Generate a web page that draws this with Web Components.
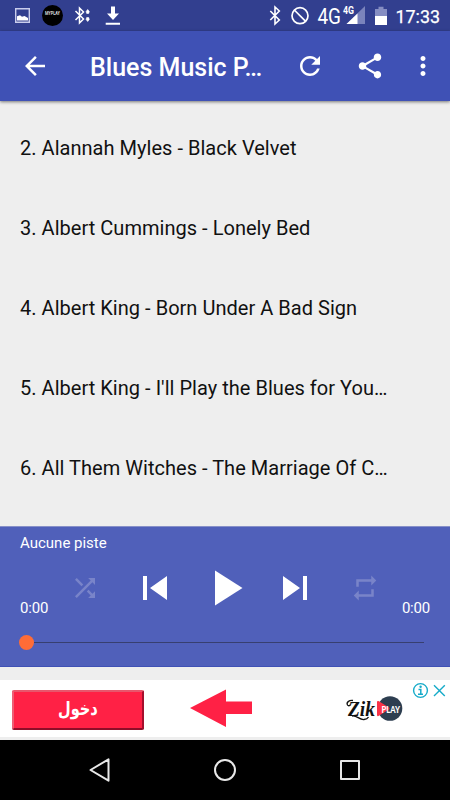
<!DOCTYPE html>
<html lang="fr">
<head>
<meta charset="utf-8">
<title>Blues Music</title>
<style>
  body {
    margin: 0;
    background: #eee;
    font-family: Roboto, sans-serif;
  }
</style>
</head>
<body>
<music-app></music-app>

<script>
class StatusBar extends HTMLElement {
  constructor() {
    super();
    this.attachShadow({ mode: "open" });
    this.shadowRoot.innerHTML = `
      <style>
        :host {
          display: flex;
          justify-content: space-between;
          height: 31px;
          background: #323f8f;
          color: #fff;
        }
        .side { display: flex; }
        svg { display: block; }
        text { font-family: Roboto, sans-serif; fill: #fff; }
      </style>
      <div class="side">
        <svg width="130" height="31" viewBox="0 0 130 31">
          <path d="M15.7 8.7h13.6v13.6H15.7z" fill="none" stroke="#c9cdec" stroke-width="1.4"/>
          <path d="M17 20.5v-4.300l3-1 2 1.500 2.500-.7 3.500 2v2.500z" fill="#fff"/>
          <circle cx="52.500" cy="15.500" r="10.500" fill="#000"/>
          <text x="52.500" y="15" font-size="4.500" font-weight="700" textLength="15" lengthAdjust="spacingAndGlyphs" text-anchor="middle" style="fill: #ddd">MYPLAY</text>
          <path d="M75.500 11l8 8-4 4V8l4 4-8 8" fill="none" stroke="#fff" stroke-width="1.500"/>
          <path d="M87.700 9.500l1.600 2-.6 2h-2l-.6-2zM87.700 21.500l1.600-2-.6-2h-2l-.6 2z" fill="#fff" stroke="#fff" stroke-width=".6"/>
          <path d="M111 6.500h4v7h4l-6 6.500-6-6.500h4zM105.700 22.800h14.300v2h-14.300z" fill="#fff"/>
        </svg>
      </div>
      <div class="side">
        <svg width="185" height="31" viewBox="265 0 185 31">
          <path d="M270.300 11l9 9-4.300 4V7l4.300 4-9 9" fill="none" stroke="#fff" stroke-width="1.600"/>
          <circle cx="300" cy="15.700" r="8" fill="none" stroke="#fff" stroke-width="1.700"/>
          <path d="M294.300 10l11.400 11.400" stroke="#fff" stroke-width="1.700"/>
          <text x="317.500" y="24" font-size="22" textLength="23.500" lengthAdjust="spacingAndGlyphs">4G</text>
          <path d="M365 6v18h-18.500z" fill="#7a83bc"/>
          <path d="M357.500 13.500V24h-11z" fill="#fff"/>
          <text x="343" y="14" font-size="10" font-weight="700" textLength="11" lengthAdjust="spacingAndGlyphs">4G</text>
          <path d="M375 9h3.500V6.800h5V9h3.500v7h-12z" fill="#858dc2"/>
          <path d="M375 16h12v9h-12z" fill="#fff"/>
          <text x="395.500" y="22.500" font-size="17.500" textLength="44.500" lengthAdjust="spacingAndGlyphs" stroke="#fff" stroke-width=".25">17:33</text>
        </svg>
      </div>
    `;
  }
}
customElements.define("status-bar", StatusBar);

class AppToolbar extends HTMLElement {
  constructor() {
    super();
    this.attachShadow({ mode: "open" });
    this.shadowRoot.innerHTML = `
      <style>
        :host {
          display: flex;
          align-items: center;
          box-sizing: border-box;
          height: 70px;
          padding: 0 12.5px 0 20px;
          background: #3f51b5;
          color: #fff;
          box-shadow: 0 1px 3px rgba(0, 0, 0, .5);
          position: relative;
        }
        svg { width: 30px; height: 30px; fill: #fff; flex: none; }
        .title {
          width: 175px;
          margin: 4px 30px 0 40px;
          font-size: 25px;
          line-height: 30px;
          font-weight: 500;
          white-space: nowrap;
        }
        .share { margin: 0 22.5px 0 30px; }
      </style>
      <svg viewBox="0 0 24 24"><path d="M20 11H7.830l5.590-5.590L12 4l-8 8 8 8 1.410-1.410L7.830 13H20v-2z"/></svg>
      <div class="title"><slot></slot></div>
      <svg viewBox="0 0 24 24"><path d="M17.650 6.350C16.200 4.900 14.210 4 12 4c-4.420 0-7.990 3.580-7.990 8s3.570 8 7.990 8c3.730 0 6.840-2.550 7.730-6h-2.080c-.82 2.330-3.040 4-5.650 4-3.310 0-6-2.690-6-6s2.690-6 6-6c1.660 0 3.140.69 4.220 1.780L13 11h7V4l-2.350 2.350z"/></svg>
      <svg class="share" viewBox="0 0 24 24"><path d="M18 16.080c-.76 0-1.440.3-1.960.77L8.910 12.700c.05-.23.09-.46.09-.7s-.04-.47-.09-.7l7.050-4.110c.54.5 1.250.81 2.040.81 1.660 0 3-1.340 3-3s-1.340-3-3-3-3 1.340-3 3c0 .24.04.47.09.7L8.040 9.810C7.500 9.310 6.790 9 6 9c-1.660 0-3 1.340-3 3s1.340 3 3 3c.79 0 1.500-.31 2.040-.81l7.120 4.160c-.05.21-.08.43-.08.65 0 1.610 1.310 2.920 2.920 2.920s2.920-1.310 2.920-2.920-1.310-2.920-2.920-2.920z"/></svg>
      <svg viewBox="0 0 24 24"><path d="M12 8c1.100 0 2-.9 2-2s-.9-2-2-2-2 .9-2 2 .9 2 2 2zm0 2c-1.100 0-2 .9-2 2s.9 2 2 2 2-.9 2-2-.9-2-2-2zm0 6c-1.100 0-2 .9-2 2s.9 2 2 2 2-.9 2-2-.9-2-2-2z"/></svg>
    `;
  }
}
customElements.define("app-toolbar", AppToolbar);

class SongRow extends HTMLElement {
  constructor() {
    super();
    this.attachShadow({ mode: "open" });
    this.shadowRoot.innerHTML = `
      <style>
        :host {
          display: flex;
          align-items: center;
          height: 80px;
          padding-left: 20px;
          color: #111;
          font-size: 20px;
          letter-spacing: .03px;
          white-space: nowrap;
        }
      </style>
      <span><slot></slot></span>
    `;
  }
}
customElements.define("song-row", SongRow);

class SongList extends HTMLElement {
  constructor() {
    super();
    this.attachShadow({ mode: "open" });
    this.shadowRoot.innerHTML = `
      <style>
        :host {
          display: block;
          box-sizing: border-box;
          height: 425px;
          padding-top: 7px;
          overflow: hidden;
          background: #eee;
        }
      </style>
      <div id="list"></div>
    `;
    this.list = this.shadowRoot.querySelector("#list");
  }

  set songs(data) {
    this.list.replaceChildren();
    for (const song of data) {
      const row = document.createElement("song-row");
      row.textContent = song;
      this.list.appendChild(row);
    }
  }
}
customElements.define("song-list", SongList);

class PlayerBar extends HTMLElement {
  constructor() {
    super();
    this.attachShadow({ mode: "open" });
    this.shadowRoot.innerHTML = `
      <style>
        :host {
          display: block;
          box-sizing: border-box;
          height: 141px;
          background: #5060ba;
          border-top: 1px solid #8790c8;
          border-bottom: 1px solid #3f51b5;
          color: #fff;
          font-size: 15px;
        }
        .track { height: 30.500px; padding-left: 20px; line-height: 33px; }
        .controls {
          display: grid;
          grid-template-columns: 30px repeat(5, 70px) 30px;
          justify-content: center;
          align-items: center;
          height: 60px;
        }
        .controls svg { justify-self: center; fill: #fff; }
        .controls .off { fill: #7984c9; }
        .time { align-self: end; line-height: 19px; letter-spacing: -.2px; white-space: nowrap; }
        .end { justify-self: end; }
        .seek { display: flex; align-items: center; height: 15px; margin: 17.500px 26px 0 19px; }
        .thumb { width: 15px; height: 15px; border-radius: 50%; background: #ff6c37; }
        .line { flex: 1; height: 1px; background: #373f70; }
      </style>
      <div class="track">Aucune piste</div>
      <div class="controls">
        <span class="time">0:00</span>
        <svg class="off" width="30" height="30" viewBox="0 0 24 24"><path d="M10.590 9.170L5.410 4 4 5.410l5.170 5.170 1.420-1.410zM14.500 4l2.040 2.040L4 18.590 5.410 20 17.960 7.460 20 9.500V4h-5.500zm.33 9.410l-1.410 1.410 3.130 3.130L14.500 20H20v-5.500l-2.040 2.040-3.130-3.130z"/></svg>
        <svg width="48" height="48" viewBox="0 0 24 24"><path d="M6 6h2v12H6zm3.500 6l8.500 6V6z"/></svg>
        <svg width="60" height="60" viewBox="0 0 24 24"><path d="M8 5v14l11-7z"/></svg>
        <svg width="48" height="48" viewBox="0 0 24 24"><path d="M6 18l8.500-6L6 6v12zM16 6v12h2V6h-2z"/></svg>
        <svg class="off" width="30" height="30" viewBox="0 0 24 24"><path d="M7 7h10v3l4-4-4-4v3H5v6h2V7zm10 10H7v-3l-4 4 4 4v-3h12v-6h-2v4z"/></svg>
        <span class="time end">0:00</span>
      </div>
      <div class="seek"><div class="thumb"></div><div class="line"></div></div>
    `;
  }
}
customElements.define("player-bar", PlayerBar);

class AdBanner extends HTMLElement {
  constructor() {
    super();
    this.attachShadow({ mode: "open" });
    this.shadowRoot.innerHTML = `
      <style>
        :host {
          display: flex;
          align-items: flex-start;
          height: 57px;
          margin-top: 13px;
          border-bottom: 3px solid #eee;
          background: #fff;
        }
        .login {
          box-sizing: border-box;
          width: 132px;
          height: 40px;
          margin: 9.500px 46px 0 12px;
          border: 2px solid;
          border-color: #e8566c #a50f2d #8e0d28 #ee5d74;
          border-radius: 2px;
          background: #ff2145;
          color: #fff;
          font: bold 19px/33px "DejaVu Sans", sans-serif;
          text-align: center;
        }
        .login span { display: inline-block; transform: scaleX(.77); }
        .arrow { margin-top: 9px; }
        .logo { margin-left: 92px; }
        svg { display: block; flex: none; }
      </style>
      <div class="login" dir="rtl" lang="ar"><span>دخول</span></div>
      <svg class="arrow" width="62" height="40" viewBox="0 0 62 40"><path d="M0 19L36 .5v12h26V25H36v13z" fill="#ff2145"/></svg>
      <svg class="logo" width="106" height="57" viewBox="344 680 106 57">
        <circle cx="390" cy="708.500" r="12.300" fill="#2d3e50"/>
        <path d="M377 702q0-1.500 1.500-1l10.500 6.500q1 1 0 2l-10.500 6.500q-1.500.5-1.500-1z" fill="#fa3348"/>
        <text x="381.500" y="712.600" font-family="Lato, sans-serif" font-weight="900" font-size="9.500" textLength="18.500" lengthAdjust="spacingAndGlyphs" fill="#fff">PLAY</text>
        <text x="348" y="716" font-family="Liberation Serif, serif" font-style="italic" font-weight="700" font-size="22" textLength="27" lengthAdjust="spacingAndGlyphs" fill="#111">Zik</text>
        <path d="M353 700.500c-4-.5-7 2-5.500 4.500 1 1.500 3 .5 2.500-.5M352 716c5-1 7 4 12 3.500 2.500-.2 4-1.500 4.500-2.500" fill="none" stroke="#111" stroke-width="1.300"/>
        <g fill="none" stroke="#16abc9" stroke-width="1.400">
          <circle cx="420.500" cy="690.500" r="6.900"/>
          <path d="M434 685.300l10.800 10.800M444.800 685.300L434 696.100"/>
          <path d="M418.500 689.500h2.300v4.500M418 694.300h5" stroke-width="1.500"/>
        </g>
        <circle cx="420.600" cy="686.800" r="1.200" fill="#16abc9"/>
      </svg>
    `;
  }
}
customElements.define("ad-banner", AdBanner);

class NavBar extends HTMLElement {
  constructor() {
    super();
    this.attachShadow({ mode: "open" });
    this.shadowRoot.innerHTML = `
      <style>
        :host {
          display: flex;
          justify-content: center;
          align-items: center;
          gap: 101px;
          height: 60px;
          background: #000;
        }
        svg { fill: none; stroke: #e8e8e8; stroke-width: 2; stroke-linejoin: round; }
      </style>
      <svg width="24" height="24" viewBox="0 0 24 24"><path d="M2.500 12L20.500 1.300v21.400z"/></svg>
      <svg width="24" height="24" viewBox="0 0 24 24"><circle cx="12" cy="12" r="10"/></svg>
      <svg width="24" height="24" viewBox="0 0 24 24"><path d="M3 3h18v18H3z"/></svg>
    `;
  }
}
customElements.define("nav-bar", NavBar);

class MusicApp extends HTMLElement {
  constructor() {
    super();
    this.attachShadow({ mode: "open" });
    this.shadowRoot.innerHTML = `
      <style>
        :host {
          display: block;
          width: 450px;
          height: 800px;
          overflow: hidden;
          background: #eee;
        }
      </style>
      <status-bar></status-bar>
      <app-toolbar>Blues Music P…</app-toolbar>
      <song-list></song-list>
      <player-bar></player-bar>
      <ad-banner></ad-banner>
      <nav-bar></nav-bar>
    `;
  }

  connectedCallback() {
    this.shadowRoot.querySelector("song-list").songs = [
      "2. Alannah Myles - Black Velvet",
      "3. Albert Cummings - Lonely Bed",
      "4. Albert King - Born Under A Bad Sign",
      "5. Albert King - I'll Play the Blues for You…",
      "6. All Them Witches - The Marriage Of C…",
    ];
  }
}
customElements.define("music-app", MusicApp);
</script>
</body>
</html>
